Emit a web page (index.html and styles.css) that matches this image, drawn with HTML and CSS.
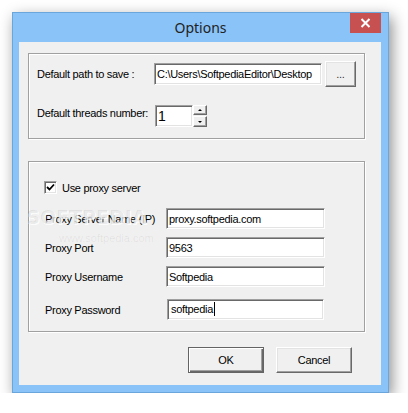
FILE: index.html
```html
<!DOCTYPE html>
<html lang="en">
<head>
    <meta charset="UTF-8">
    <meta name="viewport" content="width=device-width, initial-scale=1.0">
    <title>Options</title>
    <link rel="stylesheet" href="styles.css">
</head>
<body>
    <div class="window">
        <div class="titlebar">
            <span class="title">Options</span>
            <button class="close" aria-label="Close">
                <svg width="11" height="10" viewBox="0 0 11 10">
                    <path d="M1.5 1 L9.5 9 M9.5 1 L1.5 9" stroke="#fff" stroke-width="2" fill="none"/>
                </svg>
            </button>
        </div>

        <div class="client">
            <div class="group group-path">
                <div class="row row-path">
                    <label class="label label-path" for="path">Default path to save :</label>
                    <input type="text" id="path" class="edit edit-path" value="C:\Users\SoftpediaEditor\Desktop">
                    <button class="btn btn-browse">...</button>
                </div>
                <div class="row row-threads">
                    <label class="label label-threads" for="threads">Default threads number:</label>
                    <input type="text" id="threads" class="edit edit-threads" value="1">
                    <div class="spinner">
                        <button class="spin spin-up" aria-label="Up"><span class="arrow-up"></span></button>
                        <button class="spin spin-down" aria-label="Down"><span class="arrow-down"></span></button>
                    </div>
                </div>
            </div>

            <div class="group group-proxy">
                <div class="watermark" aria-hidden="true">
                    <span class="wm-big">SOFTPEDIA</span>
                    <span class="wm-small">www.softpedia.com</span>
                </div>

                <label class="check-row">
                    <span class="checkbox">
                        <svg width="9" height="9" viewBox="0 0 9 9">
                            <path d="M1 4 L3.5 6.5 L8 1.5" stroke="#000" stroke-width="1.8" fill="none"/>
                        </svg>
                    </span>
                    <span>Use proxy server</span>
                </label>

                <div class="field field-name">
                    <label class="label label-proxy" for="proxyName">Proxy Server Name (IP)</label>
                    <input type="text" id="proxyName" class="edit edit-proxy" value="proxy.softpedia.com">
                </div>
                <div class="field field-port">
                    <label class="label label-proxy" for="proxyPort">Proxy Port</label>
                    <input type="text" id="proxyPort" class="edit edit-proxy" value="9563">
                </div>
                <div class="field field-user">
                    <label class="label label-proxy" for="proxyUser">Proxy Username</label>
                    <input type="text" id="proxyUser" class="edit edit-proxy" value="Softpedia">
                </div>
                <div class="field field-pass">
                    <label class="label label-proxy" for="proxyPass">Proxy Password</label>
                    <div class="edit edit-proxy edit-pass">softpedia<span class="caret"></span></div>
                </div>
            </div>

            <div class="actions">
                <button class="btn btn-default">OK</button>
                <button class="btn btn-action">Cancel</button>
            </div>
        </div>
    </div>
</body>
</html>
```

FILE: styles.css
```css
body {
    margin: 0;
    padding: 0;
    background-color: #fff;
    font-family: "Liberation Sans", Arial, sans-serif;
    font-size: 11px;
    letter-spacing: -0.3px;
    color: #000;
}

.window {
    box-sizing: border-box;
    width: 377px;
    height: 381px;
    margin: 12px 0 0 12px;
    padding: 0 7px 7px 6px;
    border: 1px solid #6aa5dc;
    background-color: #89c3f7;
    box-shadow: 3px 5px 14px rgba(0, 0, 0, 0.45);
    display: flex;
    flex-direction: column;
}

.titlebar {
    height: 29px;
    margin: 0 -7px 0 -6px;
    display: grid;
    grid-template-columns: 1fr auto 1fr;
}

.title {
    grid-column: 2;
    font-family: "Noto Sans", "Open Sans", sans-serif;
    font-size: 14px;
    letter-spacing: 0;
    line-height: 29px;
    color: #222;
}

.close {
    grid-column: 3;
    justify-self: end;
    align-self: start;
    width: 31px;
    height: 20px;
    margin-right: 7px;
    padding: 0;
    border: none;
    background-color: #c75050;
    display: flex;
    align-items: center;
    justify-content: center;
}

.client {
    flex: 1;
    background-color: #f0f0f0;
    padding: 11px 0 0 9px;
}

.group {
    box-sizing: border-box;
    width: 337px;
    border: 1px solid #a0a0a0;
    box-shadow: inset 1px 1px 0 #fff, 1px 1px 0 #fff;
}

.group-path {
    height: 86px;
    padding: 7px 0 0 8px;
}

.group-proxy {
    position: relative;
    height: 171px;
    margin-top: 22px;
    padding: 19px 0 0 15px;
}

.row {
    display: flex;
    align-items: center;
}

.row-path {
    height: 26px;
}

.row-threads {
    height: 22px;
    margin-top: 18px;
    align-items: flex-start;
}

.label {
    flex: none;
    line-height: 14px;
}

.label-path {
    width: 117px;
}

.label-threads {
    width: 118px;
    margin-top: 1px;
}

.edit {
    box-sizing: border-box;
    margin: 0;
    padding: 0 2px;
    font: inherit;
    letter-spacing: inherit;
    color: #000;
    background-color: #fff;
    border: 1px solid;
    border-color: #a0a0a0 #fff #fff #a0a0a0;
    box-shadow: inset 1px 1px 0 #696969, inset -1px -1px 0 #e3e3e3;
    outline: none;
}

.edit-path {
    width: 168px;
    height: 22px;
}

.edit-threads {
    width: 38px;
    height: 22px;
    font-size: 14px;
}

.spinner {
    display: flex;
    flex-direction: column;
    gap: 1px;
}

.spin {
    box-sizing: border-box;
    width: 14px;
    padding: 0;
    background-color: #f0f0f0;
    border: 1px solid;
    border-color: #fff #696969 #696969 #fff;
    box-shadow: inset -1px -1px 0 #a0a0a0;
    display: flex;
    align-items: center;
    justify-content: center;
}

.spin-up {
    height: 10px;
}

.spin-down {
    height: 11px;
}

.arrow-up, .arrow-down {
    width: 0;
    height: 0;
    border-left: 2px solid transparent;
    border-right: 2px solid transparent;
}

.arrow-up {
    border-bottom: 2px solid #000;
}

.arrow-down {
    border-top: 2px solid #000;
}

.btn {
    box-sizing: border-box;
    margin: 0;
    padding: 0;
    font: inherit;
    letter-spacing: inherit;
    color: #000;
    background-color: #f0f0f0;
    border: 1px solid;
    border-color: #fff #696969 #696969 #fff;
    box-shadow: inset -1px -1px 0 #a0a0a0, inset 1px 1px 0 #e3e3e3;
}

.btn-browse {
    width: 31px;
    height: 26px;
    margin-left: 3px;
    color: #333;
}

.check-row {
    display: flex;
    align-items: center;
    gap: 5px;
    height: 13px;
}

.checkbox {
    box-sizing: border-box;
    width: 13px;
    height: 13px;
    background-color: #fff;
    border: 1px solid;
    border-color: #a0a0a0 #fff #fff #a0a0a0;
    box-shadow: inset 1px 1px 0 #696969, inset -1px -1px 0 #e3e3e3;
    display: flex;
    align-items: center;
    justify-content: center;
}

.field {
    display: flex;
    align-items: center;
    height: 21px;
    margin-top: 8px;
}

.field-name {
    margin-top: 14px;
}

.field-pass {
    margin-top: 12px;
}

.label-proxy {
    width: 121px;
    margin-left: 1px;
}

.edit-proxy {
    width: 159px;
    height: 21px;
}

.edit-pass {
    width: 157px;
    margin-left: 1px;
    line-height: 19px;
    padding-left: 3px;
}

.caret {
    display: inline-block;
    width: 1px;
    height: 14px;
    margin-left: 1px;
    vertical-align: -3px;
    background-color: #000;
}

.watermark {
    position: absolute;
    left: -10px;
    top: 44px;
    pointer-events: none;
    display: flex;
    flex-direction: column;
    align-items: center;
    color: rgba(0, 0, 0, 0.07);
}

.wm-big {
    font-family: "DejaVu Sans", sans-serif;
    font-size: 19px;
    font-weight: bold;
    letter-spacing: 0;
    text-shadow: 1px 1px 0 rgba(255, 255, 255, 0.8);
}

.wm-small {
    font-size: 11px;
    letter-spacing: 0;
    margin-top: 4px;
    margin-left: 40px;
}

.actions {
    display: flex;
    justify-content: flex-end;
    gap: 12px;
    margin-top: 15px;
    padding-right: 29px;
}

.btn-default, .btn-action {
    width: 76px;
    height: 26px;
}

.btn-default {
    border: 1px solid #646464;
    box-shadow: inset 1px 1px 0 #fff, inset -1px -1px 0 #696969, inset -2px -2px 0 #a0a0a0;
}
```
